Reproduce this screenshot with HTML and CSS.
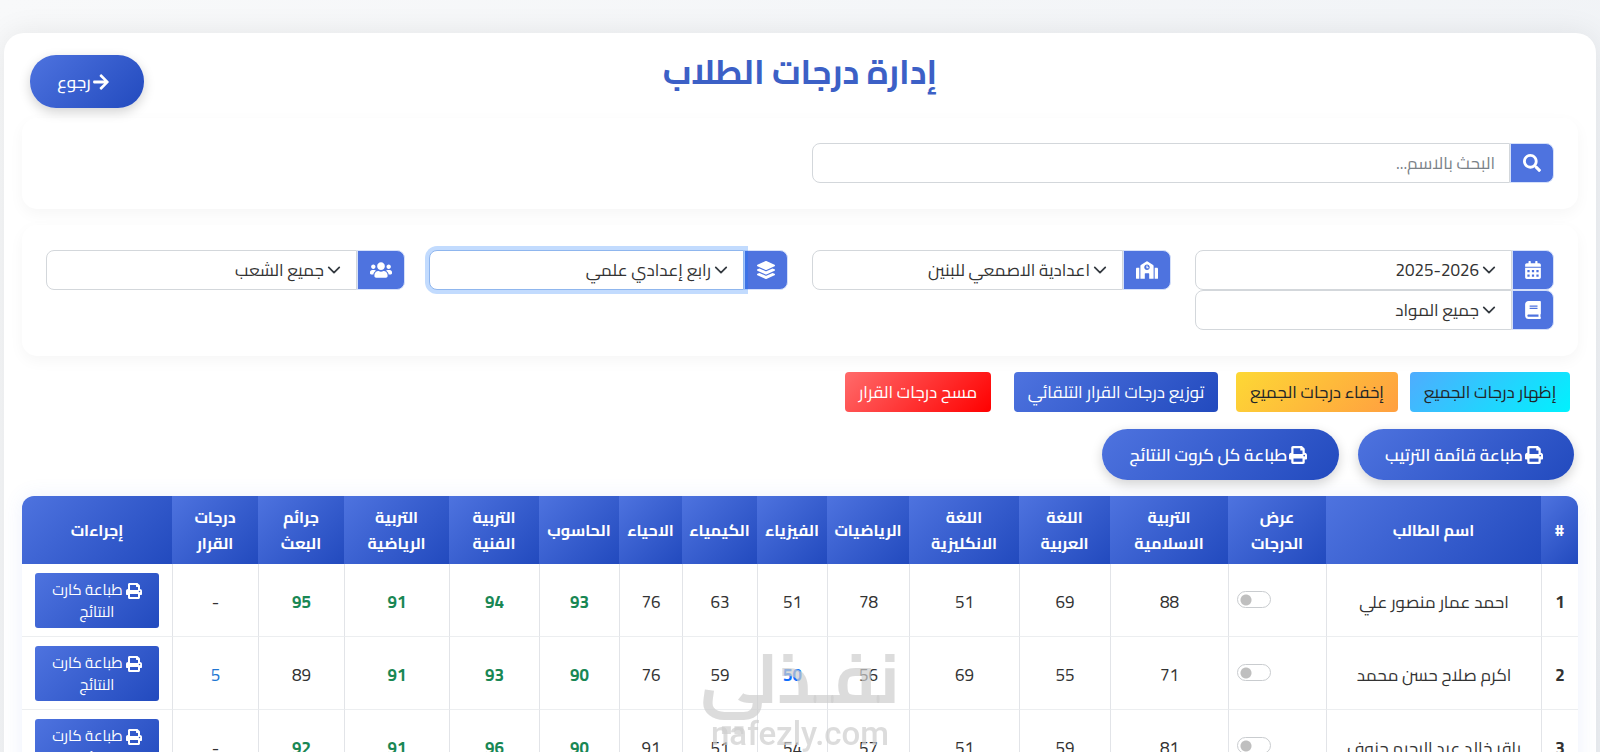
FILE: index.html
```
<!DOCTYPE html>
<html lang="ar" dir="rtl">
<head>
  <meta charset="UTF-8">
  <meta name="viewport" content="width=device-width, initial-scale=1.0">
  <title>إدارة درجات الطلاب</title>
  <link rel="stylesheet" href="styles.css">
</head>
<body>
  <svg class="sprite" aria-hidden="true">
    <symbol id="i-search" viewBox="0 0 512 512"><path d="M505 442.7L405.3 343c-4.5-4.5-10.6-7-17-7H372c27.6-35.3 44-79.7 44-128C416 93.1 322.9 0 208 0S0 93.1 0 208s93.1 208 208 208c48.3 0 92.7-16.4 128-44v16.3c0 6.4 2.5 12.5 7 17l99.7 99.7c9.4 9.4 24.6 9.4 33.9 0l28.3-28.3c9.4-9.4 9.4-24.6.1-34zM208 336c-70.7 0-128-57.2-128-128 0-70.7 57.2-128 128-128 70.7 0 128 57.2 128 128 0 70.7-57.2 128-128 128z"/></symbol>
    <symbol id="i-calendar" viewBox="0 0 448 512"><path fill-rule="evenodd" d="M400 64h-48V16c0-8.8-7.2-16-16-16h-32c-8.8 0-16 7.2-16 16v48H160V16c0-8.8-7.2-16-16-16h-32c-8.8 0-16 7.2-16 16v48H48C21.500 64 0 85.500 0 112v48h448v-48c0-26.500-21.500-48-48-48zM0 192h448v272c0 26.500-21.500 48-48 48H48c-26.500 0-48-21.500-48-48zM64 256v64h64v-64zM192 256v64h64v-64zM320 256v64h64v-64zM64 384v64h64v-64zM192 384v64h64v-64zM320 384v64h64v-64z"/></symbol>
    <symbol id="i-school" viewBox="0 0 640 512"><path d="M0 224v272c0 8.840 7.160 16 16 16h80V192H32c-17.670 0-32 14.330-32 32zm360-48h-24v-40c0-4.420-3.580-8-8-8h-16c-4.420 0-8 3.580-8 8v64c0 4.420 3.580 8 8 8h48c4.420 0 8-3.580 8-8v-16c0-4.420-3.580-8-8-8zm137.750-63.960l-160-106.670a32.020 32.020 0 0 0-35.500 0l-160 106.670A32.002 32.002 0 0 0 128 138.660V512h128V368c0-8.840 7.160-16 16-16h96c8.840 0 16 7.160 16 16v144h128V138.670c0-10.700-5.350-20.700-14.250-26.630zM320 256c-44.180 0-80-35.820-80-80s35.820-80 80-80 80 35.820 80 80-35.820 80-80 80zm288-64h-64v320h80c8.840 0 16-7.160 16-16V224c0-17.670-14.330-32-32-32z"/></symbol>
    <symbol id="i-layers" viewBox="0 0 512 512"><path d="M12.410 148.020l232.940 105.670c6.800 3.090 14.490 3.090 21.290 0l232.940-105.670c16.550-7.510 16.550-32.520 0-40.030L266.650 2.310a25.607 25.607 0 0 0-21.290 0L12.410 107.980c-16.550 7.510-16.550 32.530 0 40.040zm487.180 88.280l-58.090-26.330-161.640 73.270c-7.560 3.430-15.590 5.170-23.860 5.170s-16.290-1.740-23.860-5.170L70.510 209.970l-58.100 26.330c-16.550 7.500-16.550 32.500 0 40l232.940 105.590c6.800 3.080 14.490 3.080 21.290 0L499.590 276.300c16.550-7.500 16.550-32.500 0-40zm0 127.800l-57.870-26.230-161.860 73.370c-7.560 3.430-15.590 5.170-23.860 5.170s-16.290-1.740-23.860-5.170L70.290 337.870 12.410 364.100c-16.550 7.500-16.550 32.500 0 40l232.940 105.590c6.800 3.080 14.490 3.080 21.290 0L499.590 404.100c16.550-7.500 16.550-32.500 0-40z"/></symbol>
    <symbol id="i-users" viewBox="0 0 640 512"><path d="M96 224c35.300 0 64-28.700 64-64s-28.700-64-64-64-64 28.700-64 64 28.700 64 64 64zm448 0c35.300 0 64-28.700 64-64s-28.700-64-64-64-64 28.700-64 64 28.700 64 64 64zm32 32h-64c-17.600 0-33.500 7.100-45.100 18.600 40.300 22.100 68.900 62 75.100 109.400h66c17.700 0 32-14.300 32-32v-32c0-35.300-28.700-64-64-64zm-256 0c61.900 0 112-50.100 112-112S381.900 32 320 32 208 82.100 208 144s50.100 112 112 112zm76.800 32h-8.300c-20.800 10-43.900 16-68.500 16s-47.600-6-68.500-16h-8.300C179.600 288 128 339.600 128 403.200V432c0 26.500 21.500 48 48 48h288c26.500 0 48-21.500 48-48v-28.800c0-63.600-51.600-115.200-115.200-115.200zm-223.700-13.400C161.500 263.100 145.600 256 128 256H64c-35.300 0-64 28.700-64 64v32c0 17.700 14.300 32 32 32h65.900c6.300-47.400 34.900-87.300 75.200-109.400z"/></symbol>
    <symbol id="i-book" viewBox="0 0 448 512"><path fill-rule="evenodd" d="M448 360V24c0-13.300-10.700-24-24-24H96C43 0 0 43 0 96v320c0 53 43 96 96 96h328c13.300 0 24-10.700 24-24v-16c0-7.500-3.500-14.300-8.900-18.700-4.200-15.400-4.200-59.300 0-74.700 5.400-4.300 8.900-11.100 8.900-18.600zM128 128v32h224v-32zM128 192v32h224v-32zM381.400 448H96c-17.700 0-32-14.300-32-32 0-17.600 14.400-32 32-32h285.400c-1.900 17.100-1.900 46.900 0 64z"/></symbol>
    <symbol id="i-print" viewBox="0 0 512 512"><path fill-rule="evenodd" d="M448 192V96c0-12-4-22-12-30L382 12c-8-8-18-12-30-12H112C86 0 64 22 64 48v144c-35 0-64 29-64 64v96c0 18 14 32 32 32h32v80c0 26 22 48 48 48h288c26 0 48-22 48-48v-80h32c18 0 32-14 32-32v-96c0-35-29-64-64-64zM384 448H128v-96h256zM384 224H128V64h192v48c0 9 7 16 16 16h48zM432 296a24 24 0 1 1 0-48 24 24 0 1 1 0 48z"/></symbol>
    <symbol id="i-arrow" viewBox="0 0 448 512"><path d="M190.500 66.900l22.200-22.200c9.400-9.400 24.600-9.400 33.900 0L441 239c9.400 9.400 9.400 24.600 0 33.900L246.600 467.300c-9.400 9.400-24.600 9.400-33.900 0l-22.200-22.200c-9.500-9.500-9.300-25 .4-34.300L311.400 296H24c-13.300 0-24-10.700-24-24v-32c0-13.300 10.700-24 24-24h287.400L190.900 101.200c-9.800-9.300-10-24.800-.4-34.300z"/></symbol>
  </svg>

  <main class="container">
    <header class="page-header">
      <h1>إدارة درجات الطلاب</h1>
      <a href="#" class="btn-pill btn-back"><svg class="icon"><use href="#i-arrow"/></svg>رجوع</a>
    </header>

    <section class="panel">
      <div class="grid search-grid">
        <div class="input-group">
          <label class="addon" for="search" aria-label="البحث"><svg class="icon"><use href="#i-search"/></svg></label>
          <input type="text" id="search" class="control" placeholder="البحث بالاسم...">
        </div>
      </div>
    </section>

    <section class="panel">
      <div class="grid filter-grid">
        <div class="input-group">
          <label class="addon" for="year" aria-label="السنة"><svg class="icon narrow"><use href="#i-calendar"/></svg></label>
          <select id="year" class="control select"><option>2025-2026</option></select>
        </div>
        <div class="input-group">
          <label class="addon" for="school" aria-label="المدرسة"><svg class="icon wide"><use href="#i-school"/></svg></label>
          <select id="school" class="control select"><option>اعدادية الاصمعي للبنين</option></select>
        </div>
        <div class="input-group">
          <label class="addon" for="stage" aria-label="المرحلة"><svg class="icon"><use href="#i-layers"/></svg></label>
          <select id="stage" class="control select focused"><option>رابع إعدادي علمي</option></select>
        </div>
        <div class="input-group">
          <label class="addon" for="section" aria-label="الشعبة"><svg class="icon wide"><use href="#i-users"/></svg></label>
          <select id="section" class="control select"><option>جميع الشعب</option></select>
        </div>
        <div class="input-group">
          <label class="addon" for="subject" aria-label="المادة"><svg class="icon narrow"><use href="#i-book"/></svg></label>
          <select id="subject" class="control select"><option>جميع المواد</option></select>
        </div>
      </div>
    </section>

    <div class="actions">
      <button type="button" class="btn btn-info">إظهار درجات الجميع</button>
      <button type="button" class="btn btn-warning">إخفاء درجات الجميع</button>
      <button type="button" class="btn btn-primary">توزيع درجات القرار التلقائي</button>
      <button type="button" class="btn btn-danger">مسح درجات القرار</button>
    </div>
    <div class="print-actions">
      <button type="button" class="btn-pill btn-rank"><svg class="icon"><use href="#i-print"/></svg>طباعة قائمة الترتيب</button>
      <button type="button" class="btn-pill btn-cards"><svg class="icon"><use href="#i-print"/></svg>طباعة كل كروت النتائج</button>
    </div>

    <div class="table-wrap">
      <table>
        <colgroup>
          <col class="c-num"><col class="c-name"><col class="c-show"><col class="c-islamic"><col class="c-arabic"><col class="c-english"><col class="c-math"><col class="c-physics"><col class="c-chem"><col class="c-bio"><col class="c-computer"><col class="c-art"><col class="c-sport"><col class="c-extra"><col class="c-extra"><col class="c-actions">
        </colgroup>
        <thead>
          <tr>
            <th>#</th>
            <th>اسم الطالب</th>
            <th>عرض<br>الدرجات</th>
            <th>التربية<br>الاسلامية</th>
            <th>اللغة<br>العربية</th>
            <th>اللغة<br>الانكليزية</th>
            <th>الرياضيات</th>
            <th>الفيزياء</th>
            <th>الكيمياء</th>
            <th>الاحياء</th>
            <th>الحاسوب</th>
            <th>التربية<br>الفنية</th>
            <th>التربية<br>الرياضية</th>
            <th>جرائم<br>البعث</th>
            <th>درجات<br>القرار</th>
            <th>إجراءات</th>
          </tr>
        </thead>
        <tbody>
          <tr>
            <td class="num">1</td>
            <td>احمد عمار منصور علي</td>
            <td class="show"><input type="checkbox" class="switch" aria-label="عرض درجات احمد عمار منصور علي"></td>
            <td>88</td><td>69</td><td>51</td><td>78</td><td>51</td><td>63</td><td>76</td>
            <td class="high">93</td><td class="high">94</td><td class="high">91</td><td class="high">95</td>
            <td>-</td>
            <td class="cell-action"><button type="button" class="btn-card"><svg class="icon"><use href="#i-print"/></svg> طباعة كارت<br>النتائج</button></td>
          </tr>
          <tr>
            <td class="num">2</td>
            <td>اكرم صلاح حسن محمد</td>
            <td class="show"><input type="checkbox" class="switch" aria-label="عرض درجات اكرم صلاح حسن محمد"></td>
            <td>71</td><td>55</td><td>69</td><td>56</td><td class="raised">50</td><td>59</td><td>76</td>
            <td class="high">90</td><td class="high">93</td><td class="high">91</td><td>89</td>
            <td class="decision">5</td>
            <td class="cell-action"><button type="button" class="btn-card"><svg class="icon"><use href="#i-print"/></svg> طباعة كارت<br>النتائج</button></td>
          </tr>
          <tr>
            <td class="num">3</td>
            <td>باقر خالد عبد الرحيم جنوف</td>
            <td class="show"><input type="checkbox" class="switch" aria-label="عرض درجات باقر خالد عبد الرحيم جنوف"></td>
            <td>81</td><td>59</td><td>51</td><td>57</td><td>54</td><td>51</td><td>91</td>
            <td class="high">90</td><td class="high">96</td><td class="high">91</td><td class="high">92</td>
            <td>-</td>
            <td class="cell-action"><button type="button" class="btn-card"><svg class="icon"><use href="#i-print"/></svg> طباعة كارت<br>النتائج</button></td>
          </tr>
        </tbody>
      </table>
    </div>
  </main>

  <div class="watermark">
    <span class="watermark-ar">نفـذلي</span>
    <span class="watermark-en">nafezly.com</span>
  </div>
</body>
</html>
```
FILE: styles.css
```
* {
  box-sizing: border-box;
}
body {
  margin: 0;
  padding: 33px 4px 0;
  height: 100vh;
  overflow: hidden;
  background: linear-gradient(135deg, #f8f9fa 0%, #eef1f5 100%);
  font-family: Cairo, "Open Sans", "DejaVu Sans", sans-serif;
  font-size: 17px;
  line-height: 24px;
  color: #333;
}
button, input, select {
  font-family: inherit;
  font-size: inherit;
  line-height: inherit;
}
.sprite {
  display: none;
}
.icon {
  width: 18px;
  height: 18px;
  fill: currentColor;
  flex: none;
}
.icon.narrow {
  width: 16px;
}
.icon.wide {
  width: 22px;
}
.container {
  background: #fff;
  border-radius: 20px;
  padding: 22px 18px;
  box-shadow: 0 0 30px rgba(0, 0, 0, 0.08);
}

/* Header */
.page-header {
  position: relative;
  display: flex;
  justify-content: center;
  height: 63px;
}
h1 {
  margin: 0;
  font-size: 34px;
  line-height: 34px;
  font-weight: bold;
  color: #3c60c6;
}
.btn-pill {
  display: flex;
  align-items: center;
  justify-content: center;
  gap: 2px;
  height: 51px;
  padding: 0 8px 0 4px;
  border: none;
  border-radius: 26px;
  background: linear-gradient(135deg, #4e73df, #224abe);
  box-shadow: 0 4px 12px rgba(0, 0, 0, 0.18);
  color: #fff;
  font-weight: 600;
  text-decoration: none;
  cursor: pointer;
}
.btn-back {
  position: absolute;
  left: 8px;
  top: 0;
  width: 114px;
  height: 53px;
  padding: 0 8px 0 0;
  font-weight: 500;
}
.btn-back .icon {
  width: 16px;
}

/* Filters */
.panel {
  padding: 25px 24px 26px;
  margin-bottom: 16px;
  border-radius: 15px;
  box-shadow: 0 5px 15px rgba(0, 0, 0, 0.04);
}
.grid {
  display: grid;
  column-gap: 24px;
}
.search-grid {
  grid-template-columns: repeat(2, 1fr);
}
.filter-grid {
  grid-template-columns: repeat(4, 1fr);
}
.input-group {
  display: flex;
  height: 40px;
}
.addon {
  display: flex;
  align-items: center;
  padding: 0 12px;
  border: 1px solid #d5e0fa;
  border-radius: 0 8px 8px 0;
  background: #4e73df;
  color: #fff;
}
.control {
  flex: 1;
  min-width: 0;
  padding: 0 14px;
  border: 1px solid #d3d7db;
  border-radius: 8px 0 0 8px;
  background-color: #fff;
  color: #333;
}
.control::placeholder {
  color: #7b8288;
  opacity: 1;
}
.select {
  appearance: none;
  padding-right: 32px;
  line-height: 36px;
  background-image: url("data:image/svg+xml,%3Csvg xmlns='http://www.w3.org/2000/svg' viewBox='0 0 16 16'%3E%3Cpath fill='none' stroke='%23343a40' stroke-linecap='round' stroke-linejoin='round' stroke-width='2' d='m2 5 6 6 6-6'/%3E%3C/svg%3E");
  background-repeat: no-repeat;
  background-position: right 15px center;
  background-size: 14px;
}
.focused {
  border-color: #8fb6ee;
  box-shadow: 0 0 0 4px rgba(13, 110, 253, 0.25);
}

/* Buttons */
.actions {
  display: flex;
  gap: 12px;
  padding: 0 8px;
}
.btn {
  height: 40px;
  padding: 0;
  border: none;
  border-radius: 4px;
  color: #fff;
  white-space: nowrap;
  cursor: pointer;
}
.btn-info {
  width: 160px;
  background: linear-gradient(135deg, #4facfe, #00f2fe);
  color: #212529;
}
.btn-warning {
  width: 162px;
  margin-left: 6px;
  background: linear-gradient(135deg, #fdd835, #ff9f40);
  color: #212529;
}
.btn-primary {
  width: 204px;
  margin-left: 11px;
  background: linear-gradient(135deg, #4e73df, #224abe);
}
.btn-danger {
  width: 146px;
  background: linear-gradient(135deg, #ff6b6b, #ff0000);
}
.print-actions {
  display: flex;
  gap: 19px;
  padding: 17px 4px 16px;
}
.btn-rank {
  width: 216px;
}
.btn-cards {
  width: 237px;
}

/* Table */
.table-wrap {
  border-radius: 12px;
  overflow: hidden;
  box-shadow: 0 0 20px rgba(78, 115, 223, 0.1);
}
table {
  width: 100%;
  table-layout: fixed;
  border-collapse: separate;
  border-spacing: 0;
}
.c-num { width: 37px; }
.c-name { width: 215px; }
.c-show { width: 98px; }
.c-islamic { width: 118px; }
.c-arabic { width: 91px; }
.c-english { width: 110px; }
.c-math { width: 82px; }
.c-physics { width: 70px; }
.c-chem { width: 75px; }
.c-bio { width: 63px; }
.c-computer { width: 80px; }
.c-art { width: 90px; }
.c-sport { width: 105px; }
.c-extra { width: 86px; }
.c-actions { width: 150px; }
th {
  height: 68px;
  padding: 0;
  background: linear-gradient(135deg, #4e73df, #224abe);
  color: #fff;
  font-size: 16px;
  line-height: 26px;
  white-space: nowrap;
}
td {
  height: 73px;
  padding: 3px 0 0;
  border-left: 1px solid #e2e4e8;
  border-bottom: 1px solid #eceef0;
  text-align: center;
  white-space: nowrap;
}
td:last-child {
  border-left: none;
}
.num {
  font-weight: bold;
}
.high {
  color: #198754;
  font-weight: bold;
}
.decision {
  color: #2176d2;
}
.raised {
  color: #0d6efd;
  font-weight: bold;
}
.show {
  text-align: left;
  padding-left: 8px;
}
.switch {
  appearance: none;
  width: 34px;
  height: 17px;
  margin: 0;
  border: 1px solid #c9cccf;
  border-radius: 9px;
  background: radial-gradient(circle at 8px 8px, #bfbfbf 5px, #fff 6px);
}
.cell-action {
  padding: 1px 13px 0;
}
.btn-card {
  display: block;
  width: 100%;
  height: 55px;
  padding: 0;
  border: none;
  border-radius: 3px;
  background: linear-gradient(135deg, #4e73df, #224abe);
  color: #fff;
  font-size: 15px;
  line-height: 22px;
  cursor: pointer;
}
.btn-card .icon {
  width: 16px;
  height: 16px;
  vertical-align: middle;
}

/* Watermark over the table */
.watermark {
  position: fixed;
  top: 642px;
  left: 50%;
  transform: translateX(-50%);
  display: flex;
  flex-direction: column;
  align-items: center;
  color: rgba(205, 205, 205, 0.7);
  font-weight: bold;
  pointer-events: none;
}
.watermark-ar {
  font-size: 69px;
  line-height: 72px;
}
.watermark-en {
  font-family: Roboto, sans-serif;
  font-size: 33px;
  line-height: 40px;
  font-weight: 500;
}
```
